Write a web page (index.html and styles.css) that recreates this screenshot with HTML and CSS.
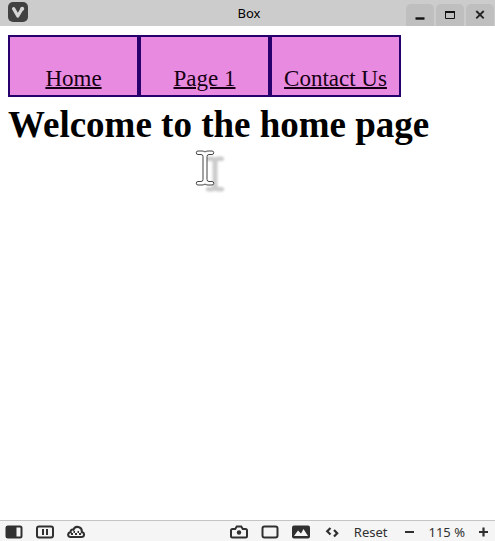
FILE: index.html
```html
<!DOCTYPE html>
<html lang="en">
<head>
<meta charset="utf-8">
<title>Box</title>
<link rel="stylesheet" href="styles.css">
</head>
<body>
<header class="titlebar">
  <svg class="app-icon" viewBox="0 0 20 20" aria-hidden="true">
    <rect width="20" height="20" rx="5" fill="#414141"/>
    <path d="M5.600 6.600 L9.800 14 L13.800 7.200" fill="none" stroke="#d6d6d6" stroke-width="3.200" stroke-linecap="round" stroke-linejoin="round"/>
    <circle cx="14.200" cy="6.800" r="2" fill="#d6d6d6"/>
  </svg>
  <span class="title">Box</span>
  <div class="window-buttons">
    <button class="window-button" type="button" aria-label="Minimize"><svg viewBox="0 0 12 12"><path d="M1.500 9.500h9" stroke="#111" stroke-width="2.400"/></svg></button>
    <button class="window-button" type="button" aria-label="Maximize"><svg viewBox="0 0 12 12"><path d="M1.500 2.500h9v7h-9z" fill="none" stroke="#111"/><path d="M1 3h10" stroke="#111" stroke-width="2"/></svg></button>
    <button class="window-button" type="button" aria-label="Close"><svg viewBox="0 0 12 12"><path d="M2.300 2l7.400 7.400M9.700 2L2.300 9.400" fill="none" stroke="#222" stroke-width="1.800"/></svg></button>
  </div>
</header>
<main class="page">
  <nav class="nav">
    <a class="nav-link" href="#home">Home</a>
    <a class="nav-link" href="#page1">Page 1</a>
    <a class="nav-link" href="#contact">Contact Us</a>
  </nav>
  <h1 class="heading">Welcome to the home page</h1>
</main>
<footer class="statusbar">
  <button class="tool" type="button" aria-label="Panel"><svg viewBox="0 0 18 14"><rect x="1.500" y="1.500" width="15" height="11" rx="1.500" fill="none" stroke="#303030" stroke-width="2"/><path d="M1.500 1.500h10v11h-10z" fill="#303030"/></svg></button>
  <button class="tool" type="button" aria-label="Tiling"><svg viewBox="0 0 18 14"><rect x="1" y="1.500" width="16" height="11" rx="2" fill="none" stroke="#303030" stroke-width="2"/><path d="M7 4v6M11 4v6" stroke="#303030" stroke-width="2"/></svg></button>
  <button class="tool" type="button" aria-label="Sync"><svg viewBox="0 0 18 14"><path d="M3.500 12h11c3.300 0 3.300-4.500.3-4.700C15.500 1.500 8 0 6.500 4.800 4.500 4 3.400 5.500 3.700 7.200.3 7.600.3 12 3.500 12z" fill="none" stroke="#303030" stroke-width="2"/><path d="M4 9h2M8 9h2M12 9h2M6.500 7h1.500M10.500 7H12" stroke="#303030" stroke-width="1.800"/></svg></button>
  <div class="tools-right">
    <button class="tool" type="button" aria-label="Capture"><svg viewBox="0 0 18 14"><path d="M2.500 4h2.700l1.600-2.500h4.400L12.800 4h2.700Q17 4 17 5.500V11q0 1.500-1.500 1.500h-13Q1 12.500 1 11V5.500Q1 4 2.500 4z" fill="none" stroke="#303030" stroke-width="2"/><circle cx="9" cy="7.500" r="2.200" fill="#303030"/></svg></button>
    <button class="tool" type="button" aria-label="Tile page"><svg viewBox="0 0 18 14"><rect x="1.500" y="1.500" width="15" height="11" rx="2" fill="none" stroke="#303030" stroke-width="2"/></svg></button>
    <button class="tool" type="button" aria-label="Images"><svg viewBox="0 0 18 14"><rect y=".5" width="18" height="13" rx="2" fill="#303030"/><path d="M2 11l4-5.500 3 3 2.500-4.500L16 11z" fill="#f5f5f5"/></svg></button>
    <button class="tool" type="button" aria-label="Page actions"><svg viewBox="0 0 18 14"><path d="M7.500 3L4.200 6.200l3.300 3.300M11 5l3.200 3.200L11 11.500" fill="none" stroke="#303030" stroke-width="2.200"/></svg></button>
    <button class="reset" type="button">Reset</button>
    <button class="tool" type="button" aria-label="Zoom out"><svg viewBox="0 0 18 14"><path d="M4 7h9" stroke="#303030" stroke-width="2"/></svg></button>
    <output class="zoom-level">115 %</output>
    <button class="tool" type="button" aria-label="Zoom in"><svg viewBox="0 0 18 14"><path d="M4 7h9M8.500 2.500v9" stroke="#303030" stroke-width="2.200"/></svg></button>
  </div>
</footer>
<svg class="cursor" viewBox="0 0 34 44" aria-hidden="true">
  <defs>
    <path id="beam" d="M3 1h4q2 0 3 1 1-1 3-1h4a1.700 1.700 0 0 1 0 3.500h-3q-2 0-2 2v23q0 2 2 2h3a1.700 1.700 0 0 1 0 3.500h-4q-2 0-3-1-1 1-3 1H3a1.700 1.700 0 0 1 0-3.500h3q2 0 2-2v-23q0-2-2-2H3A1.700 1.700 0 0 1 3 1z"/>
  </defs>
  <use class="cursor-shadow" href="#beam" x="10" y="6"/>
  <use class="cursor-shape" href="#beam"/>
</svg>
</body>
</html>
```
FILE: styles.css
```css
* {
  box-sizing: border-box;
}

body {
  display: grid;
  grid-template-rows: auto 1fr auto;
  min-height: 100vh;
  margin: 0;
  background: #fff;
  color: #000;
  font-family: "Liberation Serif", serif;
}

button {
  margin: 0;
  padding: 0;
  border: 0;
  background: none;
  color: inherit;
  font: inherit;
}

svg {
  display: block;
}

.titlebar {
  display: grid;
  grid-template-columns: 1fr auto 1fr;
  height: 26px;
  padding: 0 1px 0 8px;
  background: #ccc;
  font: 13px/26px "Noto Sans", sans-serif;
}

.app-icon {
  width: 20px;
  height: 20px;
  margin-top: 2px;
}

.title {
  margin-right: 4px;
}

.window-buttons {
  display: flex;
  justify-content: flex-end;
  align-items: flex-end;
  gap: 2px;
}

.window-button {
  display: grid;
  place-items: center;
  width: 28px;
  height: 22px;
  border-radius: 5px 5px 0 0;
  background: #bfbfbf;
}

.window-button svg {
  width: 12px;
  height: 12px;
}

.page {
  padding: 9px 8px;
}

.nav {
  display: flex;
}

.nav-link {
  width: 131px;
  padding: 29px 0 3px;
  border: 2px solid #28006e;
  background: #e88adf;
  color: #160014;
  font-size: 23px;
  line-height: 26px;
  text-align: center;
  text-decoration-thickness: 2px;
}

.heading {
  margin: 7px 0 0;
  font-size: 37px;
  line-height: 42px;
}

.statusbar {
  display: flex;
  align-items: center;
  gap: 13px;
  height: 21px;
  padding: 2px 2px 0 5px;
  border-top: 1px solid #c4c4c4;
  background: #f5f5f5;
  color: #303030;
  font: 13px/18px "Noto Sans", sans-serif;
}

.tool svg {
  width: 18px;
  height: 14px;
}

.tools-right {
  display: flex;
  align-items: center;
  gap: 13px;
  margin-left: auto;
}

.zoom-level {
  margin: 0 -3px;
}

.cursor {
  position: absolute;
  top: 150px;
  left: 195px;
  width: 34px;
  height: 44px;
  pointer-events: none;
}

.cursor-shadow {
  fill: #ccc;
  stroke: #ccc;
  filter: blur(1px);
}

.cursor-shape {
  fill: #fff;
  stroke: #444;
}
```
